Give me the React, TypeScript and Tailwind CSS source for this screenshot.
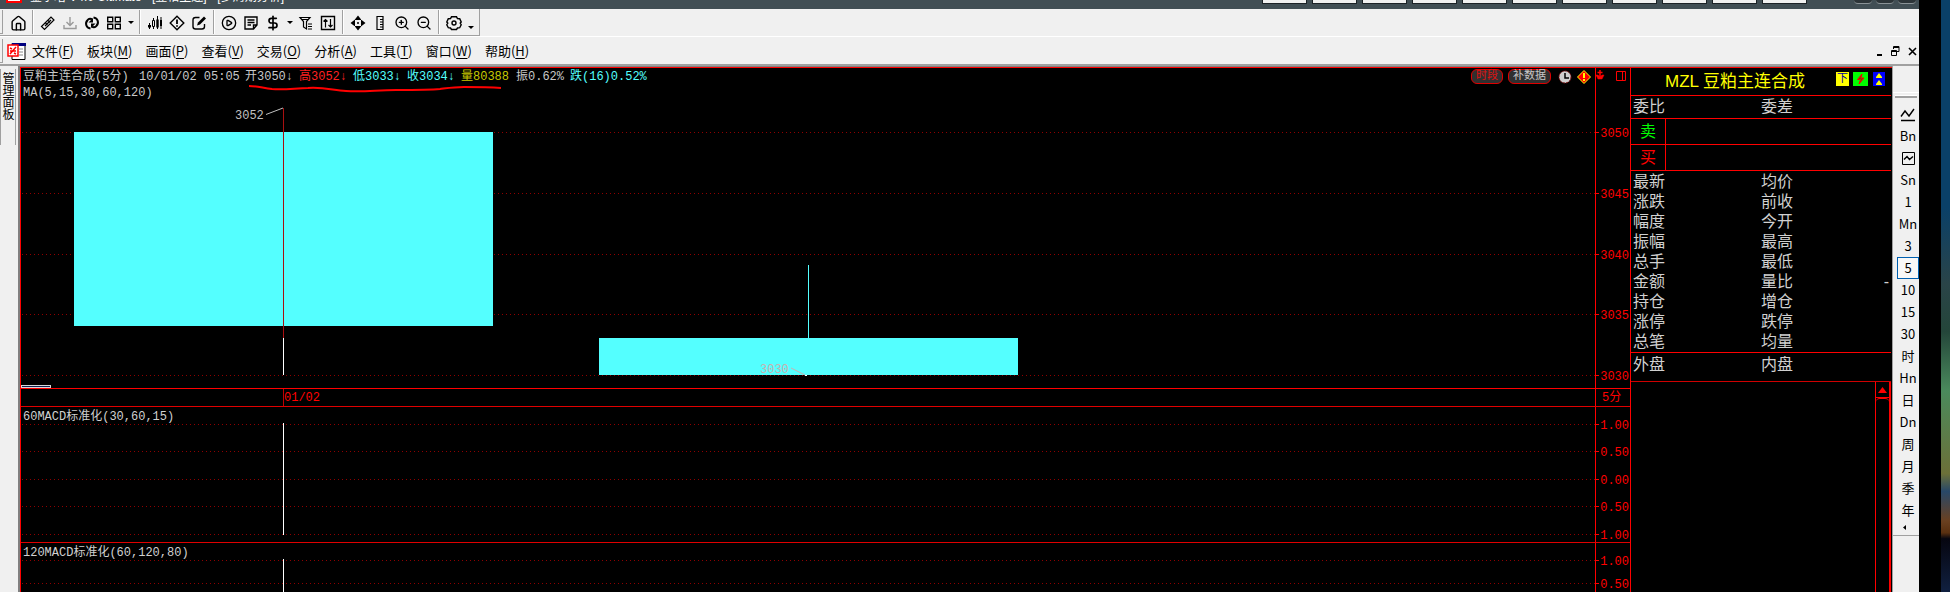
import type { ReactNode } from 'react'
import { CirclePlay, DollarSign, House, ZoomIn, ZoomOut } from 'lucide-react'

type IconProps = { children: ReactNode; className?: string }

function Icon({ children, className = 'h-4 w-4' }: IconProps) {
  return (
    <svg
      viewBox="0 0 16 16"
      className={className}
      fill="none"
      stroke="currentColor"
      strokeWidth="1.4"
      aria-hidden="true"
    >
      {children}
    </svg>
  )
}

function ToolButton({ label, children }: { label: string; children: ReactNode }) {
  return (
    <button type="button" aria-label={label} className="flex h-6 w-[22px] items-center justify-center pt-0.5">
      {children}
    </button>
  )
}

function Caret({ low = false }: { low?: boolean }) {
  return (
    <button
      type="button"
      aria-label="更多"
      className={`flex w-[11px] justify-center ${low ? 'pt-2.5' : ''}`}
    >
      <svg viewBox="0 0 6 3" className="h-[3px] w-1.5" fill="#000" aria-hidden="true">
        <path d="M0 0h6L3 3z" />
      </svg>
    </button>
  )
}

function Separator() {
  return <div className="mx-[3px] h-6 w-0.5 border-l border-[#a0a0a0] bg-white" />
}

function TitleBar() {
  return (
    <div className="flex h-[9px] items-start overflow-hidden bg-[#414e54] pr-[3px]">
      <div className="ml-1.5 h-[3px] w-4 shrink-0 border-x-2 border-b-2 border-[#ff0000] bg-white" />
      <div className="ml-2 h-3 flex-1 font-['Liberation_Sans','Noto_Sans_CJK_SC',sans-serif] text-xs leading-3 text-white">
        <span className="block -translate-y-[9px]">金字塔 V4.0 Ultimate - [豆粕主连] - [多周期分析]</span>
      </div>
      <div className="flex gap-[5px] pr-[47px]">
        {Array.from({ length: 11 }, (_, i) => (
          <div key={i} className="h-1 w-[45px] border-x border-b border-[#1c2226] bg-[#f0f0f0]" />
        ))}
      </div>
      <div className="flex gap-1">
        {[0, 1, 2].map((i) => (
          <div key={i} className="h-1 w-[18px] rounded-b border-b border-[#8a9296] bg-[#2c3438]" />
        ))}
      </div>
    </div>
  )
}

function ToolBar() {
  return (
    <div className="flex h-7 border-b border-white">
      <div className="flex items-center border-b border-r border-[#a0a0a0] pr-[3px]">
        <div className="mr-1 h-6 w-[3px] border-b border-r border-[#a0a0a0]" />
        <ToolButton label="首页">
          <House size={17} strokeWidth={2} />
        </ToolButton>
        <Separator />
        <ToolButton label="连接">
          <Icon>
            <path d="M1.500 11.500 11 2l3 3-9.500 9.500z" strokeWidth="1.200" />
            <path d="M5 11 11 5M5.500 8l2 2M8 5.500l2 2" strokeWidth="1.200" />
          </Icon>
        </ToolButton>
        <ToolButton label="下载">
          <Icon className="h-4 w-4 text-[#9a9a9a]">
            <path d="M8 2v8M4.500 7 8 10.500 11.500 7M2 10v3.500h12V10" />
          </Icon>
        </ToolButton>
        <ToolButton label="刷新">
          <Icon>
            <path
              strokeWidth="2"
              d="M6.500 13.500C2 13 .8 8 3.500 5.200 5 3.500 7 3.500 8 4.500M9.500 2.500c4.500.5 5.700 5.500 3 8.300-1.500 1.700-3.500 1.700-4.500.7"
            />
            <path fill="currentColor" stroke="none" d="M4.500 7.500H9V3zM11.500 8.500H7V13z" />
          </Icon>
        </ToolButton>
        <ToolButton label="版面">
          <Icon>
            <path d="M1.700 2.200h5v4.500h-5zM9.300 2.200h5v4.500h-5zM1.700 9.300h5v4.500h-5zM9.300 9.300h5v4.500h-5z" />
          </Icon>
        </ToolButton>
        <Caret />
        <Separator />
        <ToolButton label="K线">
          <Icon>
            <path d="M2.500 8v6M6.500 3v11M10.500 1v13M14 2v12" strokeWidth="1" />
            <path d="M1 10h3v2.500H1zM9.300 4.500h2.400v8H9.300zM13 5h2v6h-2z" fill="currentColor" stroke="none" />
            <path d="M5.500 5.500h2v6h-2z" fill="#f0f0f0" strokeWidth="1" />
          </Icon>
        </ToolButton>
        <ToolButton label="预警">
          <Icon>
            <path d="M8 1.200 14.800 8 8 14.800 1.200 8z" />
            <path d="M8 4.500v4.500M8 10.200v1.600" strokeWidth="1.800" />
          </Icon>
        </ToolButton>
        <ToolButton label="编辑">
          <Icon>
            <path d="M8.500 2.500H4.500a2.500 2.500 0 0 0-2.500 2.500v6.500A2.500 2.500 0 0 0 4.500 14h6.500a2.500 2.500 0 0 0 2.500-2.500V9" />
            <path d="M6 10.500 7 7.500l6-6 2 2-6 6z" fill="currentColor" stroke="none" />
          </Icon>
        </ToolButton>
        <Separator />
        <ToolButton label="播放">
          <CirclePlay size={16} strokeWidth={2} />
        </ToolButton>
        <ToolButton label="便笺">
          <Icon>
            <path d="M2 2h12v8l-3.500 4H2zM14 10h-3.500v4M4.500 5h7M4.500 7.500h7M4.500 10h3.500" />
          </Icon>
        </ToolButton>
        <ToolButton label="资金">
          <DollarSign size={16} strokeWidth={2.5} />
        </ToolButton>
        <Caret />
        <ToolButton label="筛选">
          <Icon>
            <path d="M2 2.500h10L8.500 6.500V14l-3-2V6.500zM3.500 4.500h7M10 9h4M10 11.500h4M10 14h4" strokeWidth="1.200" />
          </Icon>
        </ToolButton>
        <ToolButton label="排序">
          <Icon>
            <path d="M1.500 1.500h13v13h-13z" />
            <path d="M5.500 12.500V4.500M3.500 6.500l2-2 2 2M10.500 4v8M8.500 10l2 2 2-2" strokeWidth="1.200" />
          </Icon>
        </ToolButton>
        <Separator />
        <ToolButton label="移动">
          <Icon>
            <path d="M8 .5l3.500 4.500h-7zM8 15.500l3.500-4.500h-7zM.5 8 5 4.500v7zM15.500 8 11 4.500v7z" fill="currentColor" stroke="none" />
            <path d="M7.500 7.500h1v1h-1z" strokeWidth="1" />
          </Icon>
        </ToolButton>
        <ToolButton label="标尺">
          <Icon>
            <path d="M5 1.500h6v13H5zM8 4.500h3M8 7h3M8 9.500h3M8 12h3" strokeWidth="1.200" />
          </Icon>
        </ToolButton>
        <ToolButton label="放大">
          <ZoomIn size={16} strokeWidth={2} />
        </ToolButton>
        <ToolButton label="缩小">
          <ZoomOut size={16} strokeWidth={2} />
        </ToolButton>
        <Separator />
        <ToolButton label="设置">
          <Icon>
            <path d="M5.500 1.800h5l1 1.700 2.200.2 1.500 3.300-1 1 1 1.700-1.500 3-2.200.3-1 1.500h-5l-1-1.500-2.200-.3-1.500-3 1-1.700-1-1 1.500-3.300 2.200-.2z" />
            <circle cx="8" cy="8" r="2" />
          </Icon>
        </ToolButton>
        <Caret low />
      </div>
    </div>
  )
}

const menus = [
  ['文件', 'F'],
  ['板块', 'M'],
  ['画面', 'P'],
  ['查看', 'V'],
  ['交易', 'O'],
  ['分析', 'A'],
  ['工具', 'T'],
  ['窗口', 'W'],
  ['帮助', 'H'],
]

function MenuBar() {
  return (
    <div className="flex h-[27px] items-center pr-0.5 pt-px">
      <div className="mr-1 h-6 w-[3px] border-b border-r border-[#a0a0a0]" />
      <svg viewBox="0 0 19 17" className="h-[17px] w-[19px]" aria-hidden="true">
        <path d="M5 .5h13v16H5z" fill="#fff" stroke="#000" />
        <path d="M5 0h14v3H5z" fill="#000080" />
        <path d="M12 6h4M12 9h4M12 12h4" stroke="#888" />
        <path d="M1 2h10v11H1z" fill="#fff" stroke="#f00" strokeWidth="1.500" />
        <path d="M3 11l6-7M3 5l2 1M7 10l2 1M3 8h6" stroke="#f00" strokeWidth="1.500" />
      </svg>
      <nav className="ml-1.5 flex gap-[13px] text-[13px] leading-5">
        {menus.map(([name, key]) => (
          <button key={key} type="button" className="whitespace-nowrap">
            {name}(<span className="underline underline-offset-2">{key}</span>)
          </button>
        ))}
      </nav>
      <div className="ml-auto flex items-center gap-2">
        <button type="button" aria-label="最小化">
          <svg viewBox="0 0 7 9" className="h-[9px] w-[7px]" aria-hidden="true">
            <path d="M1 7h5v2H1z" />
          </svg>
        </button>
        <button type="button" aria-label="还原">
          <svg viewBox="0 0 9 10" className="h-2.5 w-[9px]" fill="none" stroke="#000" aria-hidden="true">
            <path d="M2.500 3V.5h5.500v5H6M2.500 1.500H8M.5 4.500h5v5h-5zM.5 5.500h5" />
          </svg>
        </button>
        <button type="button" aria-label="关闭">
          <svg viewBox="0 0 9 9" className="h-[9px] w-[9px]" stroke="#000" strokeWidth="1.600" aria-hidden="true">
            <path d="M1 1l7 7M8 1 1 8" />
          </svg>
        </button>
      </div>
    </div>
  )
}

function GridLines({ levels }: { levels: number[] }) {
  return (
    <>
      {levels.map((y) => (
        <line
          key={y}
          x1="1"
          x2="100%"
          y1={y + 0.5}
          y2={y + 0.5}
          stroke="#900000"
          strokeDasharray="1 3"
          shapeRendering="crispEdges"
        />
      ))}
    </>
  )
}

type Tick = { y: number; label: string }

function Axis({ ticks }: { ticks: Tick[] }) {
  return (
    <svg className="h-full w-[35px] shrink-0 border-l border-[#ff0000]" aria-hidden="true">
      {ticks.map(({ y, label }) => (
        <g key={y}>
          <rect x="0" y={y} width="3" height="1" fill="#f00" />
          <text x="33" y={y + 5} fill="#f00" textAnchor="end" className="text-xs">
            {label}
          </text>
        </g>
      ))}
    </svg>
  )
}

const priceTicks: Tick[] = [
  { y: 64, label: '3050' },
  { y: 125, label: '3045' },
  { y: 186, label: '3040' },
  { y: 246, label: '3035' },
  { y: 307, label: '3030' },
]

const macdTicks: Tick[] = [
  { y: 17, label: '1.00' },
  { y: 44, label: '0.50' },
  { y: 72, label: '0.00' },
  { y: 99, label: '0.50' },
  { y: 127, label: '1.00' },
]

const macd120Ticks: Tick[] = [
  { y: 17, label: '1.00' },
  { y: 40, label: '0.50' },
]

function PricePane() {
  return (
    <div className="relative flex h-80 shrink-0">
      <div className="relative min-w-0 flex-1">
        <svg className="absolute inset-0 h-full w-full" aria-hidden="true">
          <GridLines levels={priceTicks.map((t) => t.y)} />
          <rect x="53" y="64" width="419" height="194" fill="#54ffff" />
          <rect x="262" y="40" width="1" height="230" fill="#a81010" />
          <rect x="262" y="270" width="1" height="37" fill="#fff" />
          <rect x="578" y="270" width="419" height="37" fill="#54ffff" />
          <rect x="787" y="197" width="1" height="73" fill="#54ffff" />
          <text x="214" y="51" fill="#c0c0c0" className="text-xs">
            3052
          </text>
          <path d="M245 46.500 262 40" stroke="#c0c0c0" />
          <text x="739" y="305" fill="#c8b0b0" className="text-xs">
            3030
          </text>
          <path d="M770 300 784 307" stroke="#c8b0b0" />
          <rect x="784" y="307" width="2" height="1" fill="#fff" />
        </svg>
        <div className="relative whitespace-nowrap pl-0.5 pt-px text-xs leading-4 text-[#c8c8c8]">
          <div className="flex">
            <span className="w-[116px]">豆粕主连合成(5分)</span>
            <span className="w-[106px]">10/01/02 05:05</span>
            <span className="w-[54px]">开3050↓</span>
            <span className="w-[54px] text-[#ff2020]">高3052↓</span>
            <span className="w-[54px] text-[#54ffff]">低3033↓</span>
            <span className="w-[54px] text-[#54ffff]">收3034↓</span>
            <span className="w-[55px] text-[#c8c800]">量80388</span>
            <span className="w-[54px]">振0.62%</span>
            <span className="text-[#54ffff]">跌(16)0.52%</span>
          </div>
          <div>MA(5,15,30,60,120)</div>
        </div>
        <svg className="absolute inset-0 h-full w-full" fill="none" aria-hidden="true">
          <path
            d="M228 18c8 0 14 2 23 3 14 1 24-1 36-1 16-1 24 2 38 3 20 1 30-1 50-1 18 0 34 0 44-1 8-1 14-2 24-2 14 0 24 0 37 1"
            stroke="#f00"
            strokeWidth="2"
          />
        </svg>
        <div className="absolute right-1 top-px flex items-start gap-[5px] text-[11px] leading-[13px]">
          <button type="button" className="h-[15px] rounded-md border border-[#e00000] bg-[#303030] px-1 text-[#e01010]">
            时段
          </button>
          <button type="button" className="h-[15px] rounded-md border border-[#e00000] bg-[#303030] px-1 text-[#c8c8c8]">
            补数据
          </button>
          <button type="button" aria-label="时间" className="ml-0.5 mt-px">
            <svg viewBox="0 0 14 14" className="h-3.5 w-3.5" aria-hidden="true">
              <circle cx="7" cy="7" r="6" fill="#d0d0d0" stroke="#801010" strokeDasharray="2 1" />
              <path d="M7 3v5h4" stroke="#000" strokeWidth="1.500" fill="none" />
            </svg>
          </button>
          <button type="button" aria-label="提示" className="mt-px">
            <svg viewBox="0 0 14 14" className="h-3.5 w-3.5" aria-hidden="true">
              <path d="M7 .5 13.500 7 7 13.500.5 7z" fill="#f00" stroke="#ff0" />
              <path d="M7 3v5M7 9v2" stroke="#ff0" strokeWidth="2" />
            </svg>
          </button>
        </div>
        <div className="absolute bottom-0 left-0 h-[3px] w-[30px] border border-[#d8d8d8] bg-[#102050]" />
      </div>
      <Axis ticks={priceTicks} />
      <svg
        viewBox="0 0 30 12"
        className="absolute right-1 top-0.5 h-3 w-[30px]"
        fill="none"
        stroke="#f00"
        aria-hidden="true"
      >
        <path d="M4 0v9M1.500 2.500h5" strokeWidth="1.500" />
        <path d="M0 5h2l2 2 2-2h2L6 9H2z" fill="#f00" strokeWidth=".5" />
        <path d="M20.500 1.500h9v9h-9zM26.500 1.500v9" />
      </svg>
    </div>
  )
}

function MacdPane({ title, ticks, className }: { title: string; ticks: Tick[]; className: string }) {
  return (
    <div className={`flex border-t border-[#e00000] ${className}`}>
      <div className="relative min-w-0 flex-1">
        <svg className="absolute inset-0 h-full w-full" aria-hidden="true">
          <GridLines levels={ticks.map((t) => t.y)} />
          <rect x="262" y="16" width="1" height="112" fill="#fff" />
        </svg>
        <div className="relative pl-0.5 pt-0.5 text-xs leading-4 text-[#d0d0d0]">{title}</div>
      </div>
      <Axis ticks={ticks} />
    </div>
  )
}

function Charts() {
  return (
    <main className="flex min-w-0 flex-1 flex-col overflow-hidden font-['Liberation_Mono','Noto_Sans_CJK_SC',monospace]">
      <PricePane />
      <div className="flex h-[18px] shrink-0 border-t border-[#ff0000] text-xs leading-[18px] text-[#ff0000]">
        <div className="flex-1 pl-[262px]">
          <span className="block border-l border-[#c00000]">01/02</span>
        </div>
        <div className="w-[35px] border-l border-[#ff0000] pl-1.5">5分</div>
      </div>
      <MacdPane title="60MACD标准化(30,60,15)" ticks={macdTicks} className="h-[136px] shrink-0" />
      <MacdPane title="120MACD标准化(60,120,80)" ticks={macd120Ticks} className="flex-1 overflow-hidden" />
    </main>
  )
}

const quoteRows = [
  ['最新', '均价'],
  ['涨跌', '前收'],
  ['幅度', '今开'],
  ['振幅', '最高'],
  ['总手', '最低'],
  ['金额', '量比'],
  ['持仓', '增仓'],
  ['涨停', '跌停'],
  ['总笔', '均量'],
]

function QuotePanel() {
  return (
    <aside className="flex w-[262px] shrink-0 flex-col border-l border-[#ff0000] pr-px font-['Liberation_Sans','Noto_Sans_CJK_SC',sans-serif] text-base leading-5 text-[#d0d0d0]">
      <header className="flex h-[27px] items-center pl-[34px] pr-1.5 text-[#ffff00]">
        <h1 className="whitespace-nowrap text-[17px]">
          MZL<span className="ml-1">豆粕主连合成</span>
        </h1>
        <div className="mb-1.5 ml-auto flex gap-1">
          <button type="button" className="h-3.5 w-[13px] bg-[#ffff00] text-[11px] leading-[13px] text-[#0000a0]">
            下
          </button>
          <button type="button" aria-label="闪电" className="h-3.5 w-[15px] bg-[#00ff00]">
            <svg viewBox="0 0 15 14" className="h-3.5 w-[15px]" fill="#804000" stroke="#f00" aria-hidden="true">
              <path d="M9 2 4.500 7.500h3L6 12l5-6H8z" />
            </svg>
          </button>
          <button type="button" aria-label="置顶" className="ml-px h-3.5 w-3 bg-[#0000ff]">
            <svg viewBox="0 0 12 14" className="h-3.5 w-3" fill="#ff0" aria-hidden="true">
              <path d="M6 1l3 4v1H3V5zM6 8l3 4v1H3v-1z" />
            </svg>
          </button>
        </div>
      </header>
      <div className="flex h-[23px] border-t border-[#ff0000] pl-0.5 pt-px">
        <span className="w-32">委比</span>
        <span>委差</span>
      </div>
      <div className="flex h-[26px] border-t border-[#ff0000]">
        <span className="w-[35px] border-r border-[#ff0000] pl-[9px] pt-[3px] text-[#00ff00]">卖</span>
      </div>
      <div className="flex h-[26px] border-t border-[#ff0000]">
        <span className="w-[35px] border-r border-[#ff0000] pl-[9px] pt-[3px] text-[#ff0000]">买</span>
      </div>
      <div className="border-y border-[#ff0000] pt-px">
        <table className="w-full">
          <tbody>
            {quoteRows.map(([left, right]) => (
              <tr key={left} className="h-5">
                <th scope="row" className="w-[130px] p-0 pl-0.5 text-left font-normal">
                  {left}
                </th>
                <th scope="row" className="p-0 text-left font-normal">
                  {right}
                </th>
                <td className="p-0 pr-0.5 text-right leading-5">{right === '量比' ? '-' : ''}</td>
              </tr>
            ))}
          </tbody>
        </table>
      </div>
      <div className="flex h-7 pl-0.5 pt-0.5">
        <span className="w-32">外盘</span>
        <span>内盘</span>
      </div>
      <div className="flex flex-1 justify-end border-t border-[#d00000]">
        <div className="w-4 border-l border-r-2 border-[#ff0000]">
          <button
            type="button"
            aria-label="向上滚动"
            className="flex h-4 w-full items-center justify-center border-b border-[#ff0000]"
          >
            <svg viewBox="0 0 9 6" className="h-1.5 w-[9px]" fill="#f00" aria-hidden="true">
              <path d="M4.500 0 9 6H0z" />
            </svg>
          </button>
          <div className="h-2 rounded-t border-t border-[#ff0000]" />
        </div>
      </div>
    </aside>
  )
}

const periods = ['1', 'Mn', '3', '5', '10', '15', '30', '时', 'Hn', '日', 'Dn', '周', '月', '季', '年']

function PeriodBar() {
  return (
    <div className="flex w-[27px] shrink-0 flex-col border-l border-[#a0a0a0] bg-[#f0f0f0]">
      <div className="h-[27px] border-b border-white" />
      <div className="mx-0.5 mt-0.5 h-[3px] border-b-2 border-[#a0a0a0] bg-white" />
      <div className="flex flex-col items-center border-b border-[#a0a0a0] pb-0.5 pl-1 pt-[5px] text-[13px] leading-[22px]">
        <button type="button" aria-label="分时" className="flex h-[22px] items-center">
          <Icon>
            <path d="M1 10.500 5 5l4 5 5-7M1 14.500h14" />
          </Icon>
        </button>
        <button type="button" className="h-[22px]">
          Bn
        </button>
        <button type="button" aria-label="多日分时" className="flex h-[22px] items-center">
          <svg viewBox="0 0 13 13" className="h-[13px] w-[13px]" fill="none" stroke="#000" aria-hidden="true">
            <path d="M.5.5h12v12H.5z" />
            <path d="M2 7.500 5 4.500l2.500 3 3.500-3" strokeWidth="1.500" />
          </svg>
        </button>
        <button type="button" className="h-[22px]">
          Sn
        </button>
        {periods.map((p) => (
          <button
            key={p}
            type="button"
            className={
              p === '5'
                ? 'h-[22px] w-[22px] border border-[#0060b0] bg-[#f8f8f8] leading-5'
                : 'h-[22px]'
            }
          >
            {p}
          </button>
        ))}
        <button type="button" aria-label="收起" className="flex h-3 items-center pr-2">
          <svg viewBox="0 0 3 5" className="h-[5px] w-[3px]" aria-hidden="true">
            <path d="M3 0v5L0 2.500z" />
          </svg>
        </button>
      </div>
    </div>
  )
}

export default function App() {
  return (
    <div className="flex h-screen overflow-hidden bg-black font-['Noto_Sans_CJK_SC','Liberation_Sans',sans-serif] text-black">
      <div className="flex min-w-0 flex-1 flex-col bg-[#f0f0f0]">
        <TitleBar />
        <ToolBar />
        <MenuBar />
        <div className="flex min-h-0 flex-1 border-t-2 border-[#a0a0a0]">
          <div className="w-[18px] shrink-0 pt-[3px]">
            <button
              type="button"
              className="flex h-[76px] w-4 items-center justify-start border-y border-r border-[#a0a0a0] pt-[3px] text-xs leading-3 [writing-mode:vertical-rl]"
            >
              管理面板
            </button>
          </div>
          <div className="flex min-w-0 flex-1 border-l-2 border-t border-[#808080] bg-black">
            <div className="flex min-w-0 flex-1 border-l border-t border-[#ff0000]">
              <Charts />
              <QuotePanel />
            </div>
          </div>
          <PeriodBar />
        </div>
      </div>
      <div className="w-[22px] shrink-0" />
      <div className="w-[9px] shrink-0 bg-[linear-gradient(#0a4068_0%,#0a4068_35%,#2a4448_48%,#24463a_56%,#4a8a5c_66%,#6c7038_80%,#284868_83%,#6a4020_88%,#5a3010_90%,#060610_91%,#102040_100%)]" />
    </div>
  )
}
